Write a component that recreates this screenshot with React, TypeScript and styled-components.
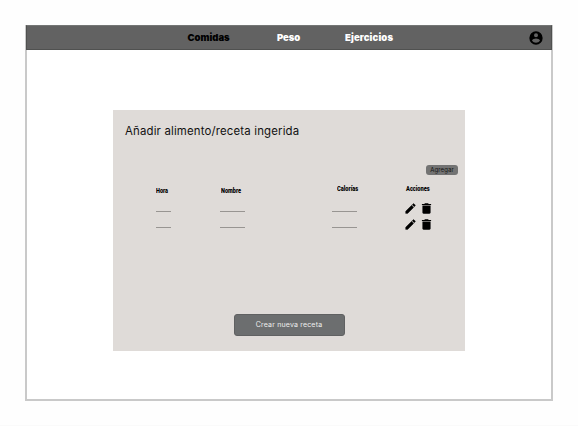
import React from "react";
import styled, { createGlobalStyle } from "styled-components";

const GlobalStyle = createGlobalStyle`
  * { box-sizing: border-box; }
  body { margin: 0; background: #fefefe; font-family: Inter, "Liberation Sans", sans-serif; }
  button { font-family: inherit; padding: 0; margin: 0; }
`;

const Page = styled.div`
  height: 426px;
  padding: 25px 25px 25px 25px;
  overflow: hidden;
  border-bottom: 1px solid #fafafa;
`;

const Frame = styled.main`
  width: 528px;
  height: 376px;
  border: 2px solid #c9c9c9;
  border-top: 0;
  background: #fff;
`;

const NavBar = styled.header`
  display: flex;
  align-items: center;
  height: 25px;
  margin: 0 -1px;
  padding: 1px 9px 0 160.5px;
  background: #626262;
  border: 1px solid #505150;
  border-top-color: #747675;
`;

const NavItem = styled.a<{ $width: number; $gap: number; $active?: boolean; $spacing: number }>`
  width: ${(p) => p.$width}px;
  margin-right: ${(p) => p.$gap}px;
  color: ${(p) => (p.$active ? "#000" : "#fff")};
  font-size: 9.5px;
  font-weight: 900;
  line-height: 12px;
  letter-spacing: ${(p) => p.$spacing}px;
  white-space: nowrap;
`;

const AccountIcon = styled.svg`
  display: block;
  width: 16px;
  height: 16px;
  margin-left: auto;
  margin-right: -1.5px;
  margin-top: -1px;
`;

const Panel = styled.section`
  display: flex;
  flex-direction: column;
  width: 352px;
  height: 241px;
  margin: 60px 0 0 86px;
  background: #dfdbd8;
`;

const Title = styled.h1`
  margin: 14px 0 0 12px;
  color: #111;
  font-size: 11.4px;
  font-weight: 400;
  line-height: 14px;
  letter-spacing: 0.17px;
  white-space: nowrap;
`;

const AddButton = styled.button`
  align-self: flex-end;
  width: 32px;
  height: 10px;
  margin: 27px 7px 0 0;
  border: 0;
  border-radius: 3px;
  background: #737373;
  color: #111;
  font-size: 6px;
  line-height: 10px;
  letter-spacing: 0.1px;
`;

const Grid = styled.div`
  display: grid;
  grid-template-columns: 63.5px 112px 73.5px 40px;
  grid-template-rows: 15px 16px 16px;
  margin: 9px 0 0 43px;
`;

const Heading = styled.span<{ $scale: number; $indent?: number; $rise?: number }>`
  margin: ${(p) => 1 - (p.$rise ?? 0)}px 0 0 ${(p) => p.$indent ?? 0}px;
  color: #000;
  font-family: Roboto, "Liberation Sans", sans-serif;
  font-size: 7.8px;
  font-weight: 900;
  line-height: 12px;
  white-space: nowrap;
  transform: scaleX(${(p) => p.$scale});
  transform-origin: left;
`;

const Blank = styled.span<{ $width: number }>`
  width: ${(p) => p.$width}px;
  height: 13px;
  border-bottom: 1px solid #989592;
`;

const Actions = styled.div`
  display: flex;
  gap: 3px;
  height: 13px;
  margin-left: -1.5px;
  padding-top: 2.500px;

  svg {
    display: block;
    width: 13px;
    height: 13px;
    flex: none;
  }
`;

const CreateButton = styled.button`
  width: 111px;
  height: 22px;
  margin: auto 0 15px 120.5px;
  border: 1px solid #606162;
  border-radius: 3px;
  background: #6c6e6f;
  color: #eee;
  font-size: 7px;
  line-height: 20px;
  letter-spacing: 0.18px;
`;

const Pencil = () => (
  <svg viewBox="0 0 24 24">
    <path
      d="M3 17.250V21h3.750L17.810 9.940l-3.750-3.750L3 17.250zM20.710 7.040a1 1 0 0 0 0-1.410l-2.340-2.340a1 1 0 0 0-1.410 0l-1.830 1.830 3.750 3.750 1.830-1.830z"
      stroke="#000"
      strokeWidth="0.6"
    />
  </svg>
);

const Trash = () => (
  <svg viewBox="0 0 24 24">
    <path d="M4.500 19.500c0 1.100.9 2 2 2h11c1.100 0 2-.9 2-2V6.500h-15v13zM20.500 3.500H16l-1-1H9l-1 1H3.500v2h17v-2z" />
  </svg>
);

const rows = ["primera", "segunda"];

export default function App() {
  return (
    <>
      <GlobalStyle />
      <Page>
        <Frame>
          <NavBar>
            <NavItem $width={42} $gap={47.5} $spacing={0} $active>Comidas</NavItem>
            <NavItem $width={25} $gap={43} $spacing={-0.05}>Peso</NavItem>
            <NavItem $width={50} $gap={0} $spacing={0.13}>Ejercicios</NavItem>
            <AccountIcon viewBox="0 0 24 24">
              <path d="M12 2a10 10 0 1 0 0 20 10 10 0 0 0 0-20zm0 3a3 3 0 1 1 0 6 3 3 0 0 1 0-6zm0 14.200a7.200 7.200 0 0 1-6-3.220c.03-1.990 4-3.080 6-3.080s5.970 1.090 6 3.080a7.200 7.200 0 0 1-6 3.220z" />
            </AccountIcon>
          </NavBar>
          <Panel>
            <Title>Añadir alimento/receta ingerida</Title>
            <AddButton>Agregar</AddButton>
            <Grid>
              <Heading $scale={0.71}>Hora</Heading>
              <Heading $scale={0.71} $indent={1}>Nombre</Heading>
              <Heading $scale={0.73} $indent={5.5} $rise={2}>Calorías</Heading>
              <Heading $scale={0.73} $indent={1} $rise={2}>Acciones</Heading>
              {rows.map((row) => (
                <React.Fragment key={row}>
                  <Blank $width={15} />
                  <Blank $width={25} />
                  <Blank $width={25} />
                  <Actions>
                    <Pencil />
                    <Trash />
                  </Actions>
                </React.Fragment>
              ))}
            </Grid>
            <CreateButton>Crear nueva receta</CreateButton>
          </Panel>
        </Frame>
      </Page>
    </>
  );
}
